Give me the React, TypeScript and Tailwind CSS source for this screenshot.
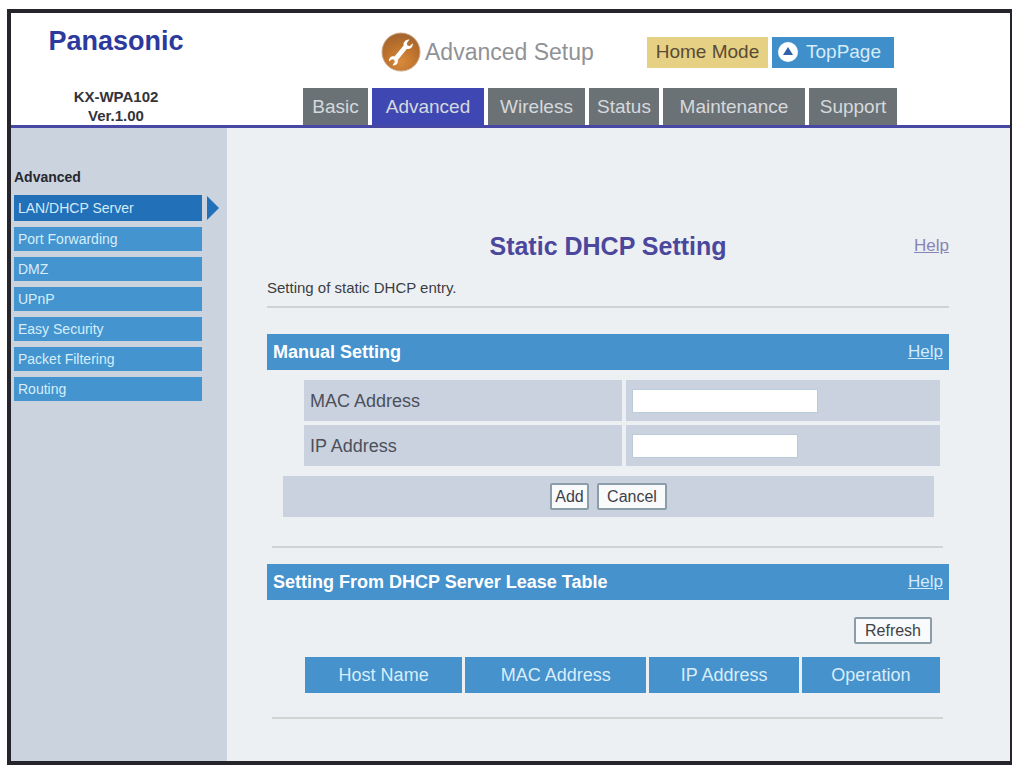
import React from "react";

type Tab = { label: string; width: string; active?: boolean };

const tabs: Tab[] = [
  { label: "Basic", width: "w-[65px]" },
  { label: "Advanced", width: "w-28", active: true },
  { label: "Wireless", width: "w-[97px]" },
  { label: "Status", width: "w-[70px]" },
  { label: "Maintenance", width: "w-[142px]" },
  { label: "Support", width: "w-[88px]" },
];

const menu = [
  "Port Forwarding",
  "DMZ",
  "UPnP",
  "Easy Security",
  "Packet Filtering",
  "Routing",
];

const columns = [
  { label: "Host Name", width: "w-[25%]" },
  { label: "MAC Address", width: "w-[29%]" },
  { label: "IP Address", width: "w-[24%]" },
  { label: "Operation", width: "w-[22%]" },
];

function WrenchBadge() {
  return (
    <svg viewBox="0 0 40 40" className="h-10 w-10 shrink-0" aria-hidden="true">
      <defs>
        <radialGradient id="badge" cx="50%" cy="75%" r="70%">
          <stop offset="0" stopColor="#d98a3c" />
          <stop offset="0.6" stopColor="#bd722c" />
          <stop offset="1" stopColor="#a5652f" />
        </radialGradient>
      </defs>
      <circle cx="20" cy="20" r="19" fill="url(#badge)" stroke="#c9a583" />
      <path
        d="M28.500 7.500 25.800 11.300 26.500 13.500 28.800 14 31.800 11.200C32.300 15 29.200 17.600 25.800 16.900L16.800 28C17.600 31.200 15 34 11.500 33.300L13.800 30.100 13.200 27.800 11 27.200 8 29.500C7.600 26 10.400 23.800 13.500 24.500L22.600 13.500C21.900 10.200 25 7 28.500 7.500Z"
        fill="#fff"
      />
    </svg>
  );
}

function UpBadge() {
  return (
    <svg viewBox="0 0 20 20" className="h-5 w-5 shrink-0" aria-hidden="true">
      <circle cx="10" cy="10" r="10" fill="#fff" />
      <path d="M10 5 15 13H5Z" fill="#2f62a8" />
    </svg>
  );
}

function HelpLink({ className }: { className: string }) {
  return (
    <a href="#help" className={`text-[17px] leading-5 underline ${className}`}>
      Help
    </a>
  );
}

function SectionBar({ title }: { title: string }) {
  return (
    <div className="flex h-9 items-center justify-between bg-[#4592cd] px-[6px] text-white">
      <h2 className="text-lg leading-6 font-bold">{title}</h2>
      <HelpLink className="text-[#d3ecfb]" />
    </div>
  );
}

function Field({ id, label, width }: { id: string; label: string; width: string }) {
  return (
    <div className="grid h-[41px] grid-cols-[317fr_314fr] gap-1">
      <label
        htmlFor={id}
        className="flex items-center bg-[#cad2df] px-[6px] text-lg leading-6 text-[#4b505b]"
      >
        {label}
      </label>
      <div className="flex items-center bg-[#cad2df] px-[6px]">
        <input
          id={id}
          type="text"
          className={`h-6 border border-[#bccbd9] bg-white px-1 text-base ${width}`}
        />
      </div>
    </div>
  );
}

function PushButton({ children, className }: { children: React.ReactNode; className: string }) {
  return (
    <button
      type="button"
      className={`h-[27px] rounded-xs border-2 border-[#8c9daa] bg-[#f8fafb] text-base leading-5 text-[#3f4147] ${className}`}
    >
      {children}
    </button>
  );
}

export default function App() {
  return (
    <div className="flex min-h-screen bg-white pt-[9px] pr-[5px] pl-[7px] font-['Liberation_Sans',Arial,sans-serif]">
      <div className="flex flex-1 flex-col border-4 border-r-2 border-[#25252b]">
        <header className="flex border-b-[3px] border-[#4648a4] bg-white">
          <div className="w-[210px] shrink-0 text-center">
            <div className="pt-3 text-[27px] leading-8 font-bold text-[#2b3a9c]">Panasonic</div>
            <div className="pt-[30px] text-[15px] leading-[19px] font-bold text-[#33343a]">
              KX-WPA102
              <br />
              Ver.1.00
            </div>
          </div>
          <div className="flex flex-1 flex-col justify-between pl-[82px]">
            <div className="flex w-[593px] items-center justify-between pt-[19px]">
              <div className="flex items-center gap-1 pl-[78px]">
                <WrenchBadge />
                <span className="text-[23px] leading-8 whitespace-nowrap text-[#8f9296]">
                  Advanced Setup
                </span>
              </div>
              <div className="flex gap-1 pr-[2px]">
                <a
                  href="#home"
                  className="flex h-[31px] w-[121px] items-center justify-center bg-[#e5d083] text-[19px] leading-6 whitespace-nowrap text-[#594b35]"
                >
                  Home Mode
                </a>
                <a
                  href="#top"
                  className="flex h-[31px] w-[122px] items-center gap-2 bg-[#3f8fcb] pl-[6px] text-[19px] leading-6 text-[#d6ecf9]"
                >
                  <UpBadge />
                  TopPage
                </a>
              </div>
            </div>
            <nav className="flex gap-1">
              {tabs.map((t) => (
                <a
                  key={t.label}
                  href={`#${t.label.toLowerCase()}`}
                  className={`flex h-[37px] items-center justify-center text-[19px] leading-6 text-[#d5d9de] ${t.width} ${
                    t.active ? "bg-[#3f48b2]" : "bg-[#6b7275]"
                  }`}
                >
                  {t.label}
                </a>
              ))}
            </nav>
          </div>
        </header>

        <div className="flex flex-1">
          <aside className="w-[216px] shrink-0 bg-[#cbd3df] pl-[3px]">
            <h2 className="pt-[39px] pb-2 text-sm leading-5 font-bold text-[#26282e]">
              Advanced
            </h2>
            <nav className="flex flex-col gap-[6px] text-sm leading-5">
              <div className="flex h-[26px] items-center gap-[5px]">
                <a
                  href="#lan"
                  className="flex h-full w-[188px] items-center bg-[#2170b8] px-1 text-[#d5eafa]"
                >
                  LAN/DHCP Server
                </a>
                <svg viewBox="0 0 12 24" className="h-6 w-3" aria-hidden="true">
                  <path d="M0 0 12 12 0 24Z" fill="#2170b8" />
                </svg>
              </div>
              {menu.map((m) => (
                <a
                  key={m}
                  href="#menu"
                  className="flex h-6 w-[188px] items-center bg-[#4494cf] px-1 text-[#d5eefb]"
                >
                  {m}
                </a>
              ))}
            </nav>
          </aside>

          <main className="flex-1 bg-[#edf0f3] pt-[102px] pr-[61px] pl-10">
            <div className="grid grid-cols-[1fr_auto_1fr] items-center">
              <h1 className="col-start-2 text-[25px] leading-8 font-bold text-[#4a479c]">
                Static DHCP Setting
              </h1>
              <HelpLink className="justify-self-end text-[#8884b8]" />
            </div>
            <p className="pt-4 pb-2 text-[15px] leading-5 text-[#3b3d43]">
              Setting of static DHCP entry.
            </p>
            <hr className="border-t-2 border-[#d0d3d2]" />

            <section className="pt-[26px]">
              <SectionBar title="Manual Setting" />
              <form>
                <div className="flex flex-col gap-1 pt-[10px] pr-[9px] pl-[37px]">
                  <Field id="mac" label="MAC Address" width="w-[186px]" />
                  <Field id="ip" label="IP Address" width="w-[166px]" />
                </div>
                <div className="mt-[10px] mr-[15px] ml-4 flex h-[41px] items-center justify-center gap-2 bg-[#cad2df]">
                  <PushButton className="w-[39px]">Add</PushButton>
                  <PushButton className="w-[70px]">Cancel</PushButton>
                </div>
              </form>
              <hr className="mt-[29px] mr-[6px] ml-[5px] border-t-2 border-[#d0d3d2]" />
            </section>

            <section className="pt-4">
              <SectionBar title="Setting From DHCP Server Lease Table" />
              <div className="flex justify-end pt-[17px] pr-[17px] pb-[13px]">
                <PushButton className="w-[78px]">Refresh</PushButton>
              </div>
              <div className="pr-[9px] pl-[38px]">
                <table className="w-full table-fixed">
                  <thead>
                    <tr>
                      {columns.map((c) => (
                        <th
                          key={c.label}
                          scope="col"
                          className={`h-9 border-l-[3px] border-[#edf0f3] bg-[#4592cd] text-lg leading-6 font-normal text-[#d9edf9] first:border-l-0 ${c.width}`}
                        >
                          {c.label}
                        </th>
                      ))}
                    </tr>
                  </thead>
                </table>
              </div>
              <hr className="mt-6 mr-[6px] mb-10 ml-[5px] border-t-2 border-[#d0d3d2]" />
            </section>
          </main>
        </div>
      </div>
    </div>
  );
}
